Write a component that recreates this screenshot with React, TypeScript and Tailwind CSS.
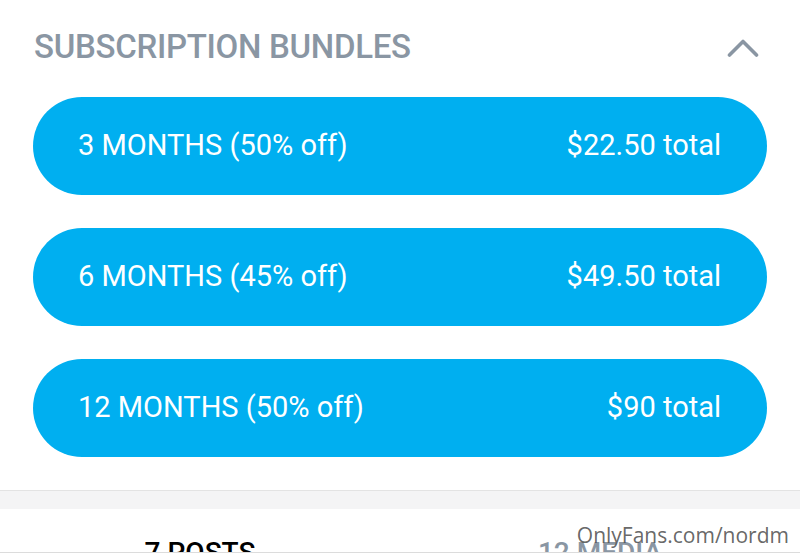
type Bundle = {
  months: number;
  discount: number;
  total: string;
};

const bundles: Bundle[] = [
  { months: 3, discount: 50, total: "$22.50" },
  { months: 6, discount: 45, total: "$49.50" },
  { months: 12, discount: 50, total: "$90" },
];

export default function App() {
  return (
    <div className="relative h-[558px] w-[800px] overflow-hidden bg-white font-['Roboto',sans-serif]">
      {/* Bundles section */}
      <div className="px-[33px]">
        <div className="flex h-[93px] items-center justify-between pl-px">
          <h2 className="text-[33px] font-medium tracking-[-0.3px] text-[#8a96a3]">SUBSCRIPTION BUNDLES</h2>
          <svg width="32" height="18" viewBox="0 0 32 18" className="mr-[8px] mt-[2px]">
            <polyline
              points="2.5,16 16,2.5 29.5,16"
              fill="none"
              stroke="#8a96a3"
              strokeWidth="3.6"
              strokeLinecap="round"
              strokeLinejoin="round"
            />
          </svg>
        </div>

        <div className="mt-[4px] flex flex-col gap-[33px]">
          {bundles.map((b) => (
            <button
              key={b.months}
              className="flex h-[98px] items-center justify-between rounded-full bg-[#00aff0] pl-[45px] pr-[46px] text-[29px] text-white"
            >
              <span>
                {b.months} MONTHS ({b.discount}% off)
              </span>
              <span>{b.total} total</span>
            </button>
          ))}
        </div>
      </div>

      {/* Divider band */}
      <div className="mt-[33px] h-[19px] border-t border-[#e3e3e3] bg-[#f4f4f5]" />

      {/* Tabs */}
      <div className="h-[44px] overflow-hidden border-b border-[#dcdcdc]">
        <div className="grid grid-cols-2 pt-[30px] text-[28px] font-medium leading-none">
          <span className="text-center text-black">7 POSTS</span>
          <span className="text-center text-[#8a96a3]">12 MEDIA</span>
        </div>
      </div>

      <span className="absolute right-[11px] top-[520px] font-['Open_Sans',sans-serif] text-[21px] text-[#555]/90">
        OnlyFans.com/nordm
      </span>
    </div>
  );
}
